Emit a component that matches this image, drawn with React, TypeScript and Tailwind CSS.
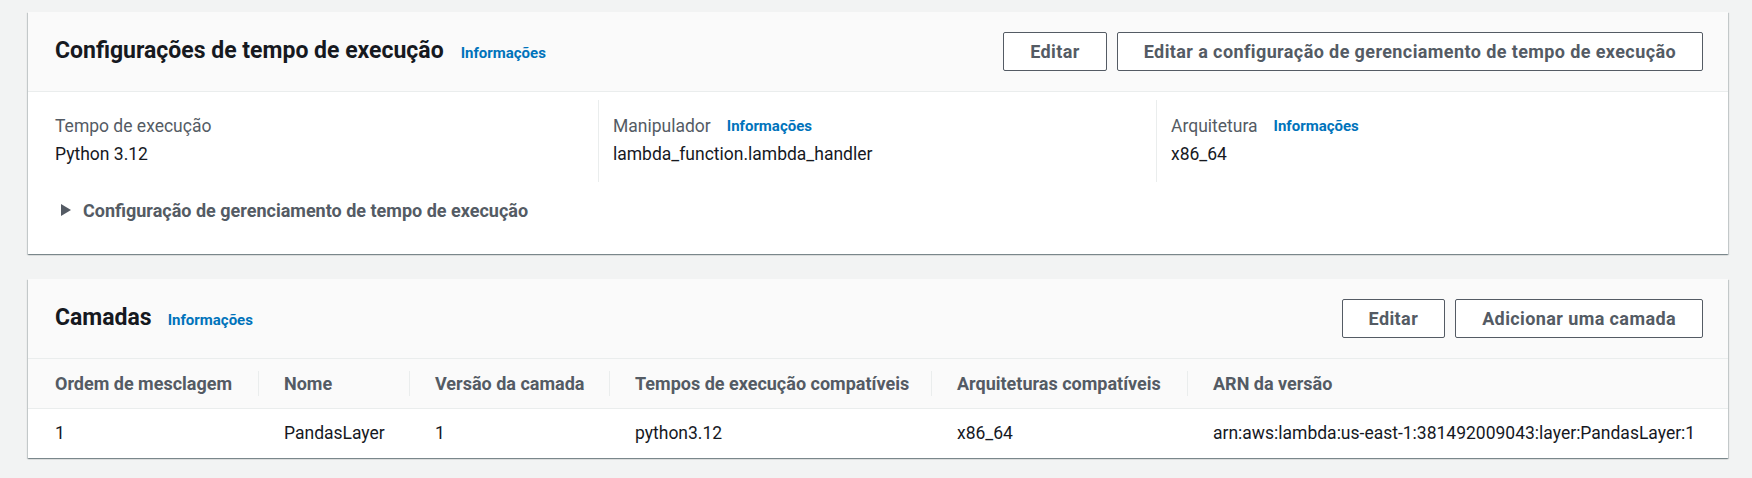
import { ReactNode } from "react"

const cardShadow =
  "shadow-[0_1px_1px_0_rgba(0,28,36,0.3),1px_1px_1px_0_rgba(0,28,36,0.15),-1px_1px_1px_0_rgba(0,28,36,0.15)]"

function InfoLink({ className = "" }: { className?: string }) {
  return (
    <a href="#" className={`text-[15px] font-bold text-[#0073bb] leading-none ${className}`}>
      Informações
    </a>
  )
}

function Button({ children }: { children: ReactNode }) {
  return (
    <button className="h-[39px] px-[26px] border border-[#545b64] rounded-[2px] bg-white text-[18px] font-bold tracking-[0.4px] text-[#545b64] leading-none">
      {children}
    </button>
  )
}

function CardHeader({ title, gap, actions }: { title: string; gap: string; actions: ReactNode }) {
  return (
    <div className="h-[80px] bg-[#fafafa] border-b border-[#eaeded] flex items-center justify-between pl-[27px] pr-[25px]">
      <div className="flex items-baseline">
        <h2 className="text-[23px] font-bold text-[#16191f]">{title}</h2>
        <InfoLink className={gap} />
      </div>
      <div className="flex items-center gap-[10px]">{actions}</div>
    </div>
  )
}

const columns = [
  { label: "Tempo de execução", value: "Python 3.12", info: false, w: "w-[570px]" },
  { label: "Manipulador", value: "lambda_function.lambda_handler", info: true, w: "w-[558px]" },
  { label: "Arquitetura", value: "x86_64", info: true, w: "flex-1" },
]

const tableCols = [
  { head: "Ordem de mesclagem", cell: "1", w: "w-[230px]" },
  { head: "Nome", cell: "PandasLayer", w: "w-[151px]" },
  { head: "Versão da camada", cell: "1", w: "w-[200px]" },
  { head: "Tempos de execução compatíveis", cell: "python3.12", w: "w-[322px]" },
  { head: "Arquiteturas compatíveis", cell: "x86_64", w: "w-[256px]" },
  { head: "ARN da versão", cell: "arn:aws:lambda:us-east-1:381492009043:layer:PandasLayer:1", w: "" },
]

export default function App() {
  return (
    <div className="min-h-[478px] w-full bg-[#f2f3f3] pt-[12px] pl-[28px] pr-[24px] pb-[20px] font-[Roboto,'Open_Sans',sans-serif] text-[17.5px]">
      {/* Runtime settings */}
      <section className={`bg-white ${cardShadow}`}>
        <CardHeader
          title="Configurações de tempo de execução"
          gap="ml-[17px]"
          actions={
            <>
              <Button>Editar</Button>
              <Button>Editar a configuração de gerenciamento de tempo de execução</Button>
            </>
          }
        />
        <div className="pt-[8px] pb-[30px]">
          <div className="flex">
            {columns.map((c, i) => (
              <div
                key={c.label}
                className={`${c.w} h-[82px] pt-[12px] ${i === 0 ? "pl-[27px]" : "pl-[14px] border-l border-[#eaeded]"}`}
              >
                <div className="h-[28px] flex items-center text-[#545b64]">
                  {c.label}
                  {c.info && <InfoLink className="ml-[16px]" />}
                </div>
                <div className="h-[28px] flex items-center text-[#16191f]">{c.value}</div>
              </div>
            ))}
          </div>
          <div className="mt-[14px] h-[28px] pl-[33px] flex items-center gap-[12px] text-[18px] text-[#545b64] font-bold">
            <svg width="10" height="12" viewBox="0 0 10 12">
              <path d="M0 0 L10 6 L0 12 Z" fill="#545b64" />
            </svg>
            Configuração de gerenciamento de tempo de execução
          </div>
        </div>
      </section>

      {/* Layers */}
      <section className={`mt-[25px] bg-white ${cardShadow}`}>
        <CardHeader
          title="Camadas"
          gap="ml-[16px]"
          actions={
            <>
              <Button>Editar</Button>
              <Button>Adicionar uma camada</Button>
            </>
          }
        />
        <table className="w-full border-collapse text-left">
          <thead>
            <tr className="h-[49px] bg-[#fafafa] border-b border-[#eaeded]">
              {tableCols.map((c, i) => (
                <th key={c.head} className={`${c.w} p-0 text-[18px] font-bold text-[#545b64]`}>
                  <div
                    className={`h-[25px] flex items-center ${i === 0 ? "pl-[27px]" : "pl-[25px] border-l border-[#eaeded]"}`}
                  >
                    {c.head}
                  </div>
                </th>
              ))}
            </tr>
          </thead>
          <tbody>
            <tr className="h-[50px]">
              {tableCols.map((c, i) => (
                <td key={c.head} className={`p-0 text-[#16191f] ${i === 0 ? "pl-[27px]" : "pl-[26px]"}`}>
                  {c.cell}
                </td>
              ))}
            </tr>
          </tbody>
        </table>
      </section>
    </div>
  )
}
